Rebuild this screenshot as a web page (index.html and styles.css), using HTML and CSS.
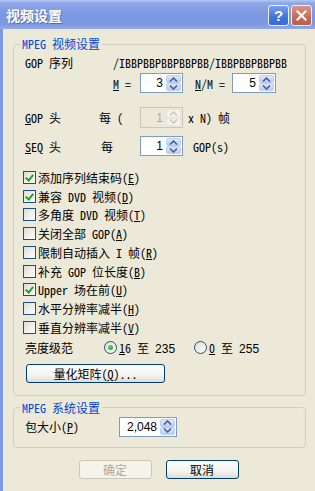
FILE: index.html
```html
<!DOCTYPE html>
<html lang="zh-CN">
<head>
    <meta charset="UTF-8">
    <title>视频设置</title>
    <link rel="stylesheet" href="styles.css">
</head>
<body>
    <div class="window">
        <div class="titlebar">
            <span class="title">视频设置</span>
            <span class="tb-buttons">
                <span class="tb-btn help">?</span>
                <span class="tb-btn close">
                    <svg width="11" height="11" viewBox="0 0 11 11"><path d="M1.5 1.5 L9.5 9.5 M9.5 1.5 L1.5 9.5" stroke="#fff" stroke-width="2.2" stroke-linecap="square"/></svg>
                </span>
            </span>
        </div>
        <div class="client">
            <fieldset class="group video">
                <legend>MPEG 视频设置</legend>
                <div class="row r1">
                    <span class="lbl w88">GOP 序列</span>
                    <span>/IBBPBBPBBPBBPBB/IBBPBBPBBPBB</span>
                </div>
                <div class="row r2">
                    <span class="lbl w27"><u>M</u> =</span>
                    <span class="spin w43"><span class="val">3</span><span class="arrows"><i class="up"><svg width="9" height="5" viewBox="0 0 9 5"><path d="M1 4.5 L4.5 1 L8 4.5" fill="none" stroke="#4d6185" stroke-width="1.6"/></svg></i><i class="dn"><svg width="9" height="5" viewBox="0 0 9 5"><path d="M1 0.5 L4.5 4 L8 0.5" fill="none" stroke="#4d6185" stroke-width="1.6"/></svg></i></span></span>
                    <span class="lbl w37 ml12"><u>N</u>/M =</span>
                    <span class="spin w44"><span class="val">5</span><span class="arrows"><i class="up"><svg width="9" height="5" viewBox="0 0 9 5"><path d="M1 4.5 L4.5 1 L8 4.5" fill="none" stroke="#4d6185" stroke-width="1.6"/></svg></i><i class="dn"><svg width="9" height="5" viewBox="0 0 9 5"><path d="M1 0.5 L4.5 4 L8 0.5" fill="none" stroke="#4d6185" stroke-width="1.6"/></svg></i></span></span>
                </div>
                <div class="row r3">
                    <span class="lbl w74"><u>G</u>OP 头</span>
                    <span class="lbl w41">每 (</span>
                    <span class="spin w43 disabled"><span class="val">1</span><span class="arrows"><i class="up"><svg width="9" height="5" viewBox="0 0 9 5"><path d="M1 4.5 L4.5 1 L8 4.5" fill="none" stroke="#c9c7ba" stroke-width="1.6"/></svg></i><i class="dn"><svg width="9" height="5" viewBox="0 0 9 5"><path d="M1 0.5 L4.5 4 L8 0.5" fill="none" stroke="#c9c7ba" stroke-width="1.6"/></svg></i></span></span>
                    <span class="ml5">x N) 帧</span>
                </div>
                <div class="row r4">
                    <span class="lbl w76"><u>S</u>EQ 头</span>
                    <span class="lbl w39">每</span>
                    <span class="spin w43"><span class="val">1</span><span class="arrows"><i class="up"><svg width="9" height="5" viewBox="0 0 9 5"><path d="M1 4.5 L4.5 1 L8 4.5" fill="none" stroke="#4d6185" stroke-width="1.6"/></svg></i><i class="dn"><svg width="9" height="5" viewBox="0 0 9 5"><path d="M1 0.5 L4.5 4 L8 0.5" fill="none" stroke="#4d6185" stroke-width="1.6"/></svg></i></span></span>
                    <span class="ml10">GOP(s)</span>
                </div>
                <ul class="checks">
                    <li><span class="box on"></span>添加序列结束码(<u>E</u>)</li>
                    <li><span class="box on"></span>兼容 DVD 视频(<u>D</u>)</li>
                    <li><span class="box"></span>多角度 DVD 视频(<u>T</u>)</li>
                    <li><span class="box"></span>关闭全部 GOP(<u>A</u>)</li>
                    <li><span class="box"></span>限制自动插入 I 帧(<u>R</u>)</li>
                    <li><span class="box"></span>补充 GOP 位长度(<u>B</u>)</li>
                    <li><span class="box on"></span>Upper 场在前(<u>U</u>)</li>
                    <li><span class="box"></span>水平分辨率减半(<u>H</u>)</li>
                    <li><span class="box"></span>垂直分辨率减半(<u>V</u>)</li>
                </ul>
                <div class="row radios">
                    <span class="lbl w79">亮度级范</span>
                    <span class="radio on"></span>
                    <span class="rtext"><u>1</u>6 至 <span class="num">235</span></span>
                    <span class="radio second"></span>
                    <span class="rtext"><u>0</u> 至 <span class="num">255</span></span>
                </div>
                <div class="row r-btn">
                    <span class="btn wide">量化矩阵(<u>Q</u>)...</span>
                </div>
            </fieldset>
            <fieldset class="group system">
                <legend>MPEG 系统设置</legend>
                <div class="row r-pkt">
                    <span class="lbl w94">包大小(<u>P</u>)</span>
                    <span class="spin w58"><span class="val num">2,048</span><span class="arrows"><i class="up"><svg width="9" height="5" viewBox="0 0 9 5"><path d="M1 4.5 L4.5 1 L8 4.5" fill="none" stroke="#4d6185" stroke-width="1.6"/></svg></i><i class="dn"><svg width="9" height="5" viewBox="0 0 9 5"><path d="M1 0.5 L4.5 4 L8 0.5" fill="none" stroke="#4d6185" stroke-width="1.6"/></svg></i></span></span>
                </div>
            </fieldset>
            <div class="actions">
                <span class="btn disabled">确定</span>
                <span class="btn">取消</span>
            </div>
        </div>
    </div>
</body>
</html>
```

FILE: styles.css
```css
body {
    margin: 0;
    background-color: #ece9d8;
    font-family: "Noto Sans Mono CJK SC", "Noto Sans CJK SC", sans-serif;
    font-size: 12px;
    color: #000;
}

.window {
    width: 315px;
    height: 491px;
    overflow: hidden;
}

.titlebar {
    height: 29px;
    display: flex;
    align-items: center;
    justify-content: space-between;
    padding: 0 3px 0 6px;
    box-sizing: border-box;
    background: linear-gradient(to bottom, #b3c6f5 0, #8fa8eb 3px, #7d98e1 45%, #7e99e2 85%, #93abea 100%);
}

.title {
    color: #fff;
    font-size: 14px;
    font-weight: bold;
    text-shadow: 1px 1px 0 #5a6fa8;
}

.tb-buttons {
    display: flex;
    gap: 2px;
    padding-top: 1px;
}

.tb-btn {
    width: 19px;
    height: 19px;
    border: 1px solid #eef2fc;
    border-radius: 3px;
    display: flex;
    align-items: center;
    justify-content: center;
    color: #fff;
    font-family: "Liberation Sans", sans-serif;
    font-weight: bold;
    font-size: 15px;
}

.help {
    background: linear-gradient(to bottom, #7aa0ee, #3f74dc 60%, #3a6bd4);
}

.close {
    background: linear-gradient(to bottom, #d99585, #c46a58 60%, #b85e4c);
}

.client {
    border-left: 3px solid #7d99e1;
    height: 462px;
    box-sizing: border-box;
    padding-top: 8px;
}

.group {
    margin: 0 9px 0 10px;
    padding: 0 11px 12px 11px;
    border: 1px solid #d0d0bf;
    border-radius: 4px;
}

.group legend {
    margin-left: -5px;
    padding: 0 2px;
    color: #0046d5;
    line-height: 14px;
}

.system {
    margin-top: 5px;
    padding-bottom: 10px;
}

.row {
    display: flex;
    align-items: center;
    white-space: nowrap;
}

.r1 { height: 16px; margin-top: 3px; }
.r2 { height: 20px; margin-top: 3px; padding-left: 88px; }
.r3 { height: 21px; margin-top: 14px; }
.r4 { height: 20px; margin-top: 8px; }
.radios { height: 20px; margin-top: 1px; }
.r-btn { margin-top: 6px; }
.r-pkt { height: 20px; margin-top: 2px; }

.lbl { flex: none; }
.w27 { width: 27px; }
.w37 { width: 37px; }
.w39 { width: 39px; }
.w41 { width: 41px; }
.w74 { width: 74px; }
.w76 { width: 76px; }
.w79 { width: 79px; }
.w88 { width: 88px; }
.w94 { width: 94px; }
.ml5 { margin-left: 5px; }
.ml10 { margin-left: 10px; }
.ml12 { margin-left: 12px; }

.spin {
    flex: none;
    display: flex;
    height: 100%;
    box-sizing: border-box;
    border: 1px solid #7f9db9;
    background-color: #fff;
    padding: 1px;
}

.w43 { width: 43px; }
.w44 { width: 44px; }
.w58 { width: 58px; }

.spin .val {
    flex: 1;
    padding-right: 3px;
    font-family: "Liberation Sans", sans-serif;
    font-size: 12px;
    display: flex;
    align-items: center;
    justify-content: flex-end;
}

.spin .arrows {
    width: 15px;
    display: flex;
    flex-direction: column;
}

.spin i {
    flex: 1;
    display: flex;
    align-items: center;
    justify-content: center;
    border: 1px solid #b9cdf6;
    border-radius: 2px;
    background: linear-gradient(to bottom, #dde8fd, #b8cdf8);
}

.spin.disabled {
    background-color: #ece9d8;
    border-color: #c9c7ba;
    color: #aca899;
}

.spin.disabled i {
    border-color: #e8e6dc;
    background: #f4f3ee;
}

.checks {
    list-style: none;
    margin: 12px 0 0 -2px;
    padding: 0;
}

.checks li {
    height: 18.75px;
    display: flex;
    align-items: center;
}

.box {
    width: 13px;
    height: 13px;
    box-sizing: border-box;
    border: 1px solid #1c5180;
    background: linear-gradient(135deg, #dcdcd7, #fff);
    margin-right: 2px;
    flex: none;
    position: relative;
}

.box.on::after {
    content: "";
    position: absolute;
    left: 3px;
    top: 1px;
    width: 3px;
    height: 6px;
    border: solid #21a121;
    border-width: 0 2px 2px 0;
    transform: rotate(40deg);
}

.radio {
    width: 13px;
    height: 13px;
    box-sizing: border-box;
    border: 1px solid #1c5180;
    border-radius: 50%;
    background: linear-gradient(135deg, #dcdcd7, #fff);
    flex: none;
    margin-right: 2px;
    position: relative;
}

.radio.on::after {
    content: "";
    position: absolute;
    left: 3px;
    top: 3px;
    width: 5px;
    height: 5px;
    border-radius: 50%;
    background: radial-gradient(circle at 35% 35%, #5ed35e, #21a121);
}

.radio.second { margin-left: 19px; }

.num {
    font-family: "Liberation Sans", sans-serif;
    font-size: 12px;
}

.btn {
    display: inline-flex;
    align-items: center;
    justify-content: center;
    width: 73px;
    height: 19px;
    box-sizing: border-box;
    border: 1px solid #003c74;
    border-radius: 3px;
    background: linear-gradient(to bottom, #fff, #f3f3ef 60%, #dedcd2);
}

.btn.wide {
    width: 139px;
    margin-left: 1px;
}

.btn.disabled {
    border-color: #c9c7ba;
    background: #f5f4ea;
    color: #aca899;
}

.actions {
    display: flex;
    gap: 14px;
    justify-content: center;
    margin-top: 12px;
    padding-right: 1px;
}
```
